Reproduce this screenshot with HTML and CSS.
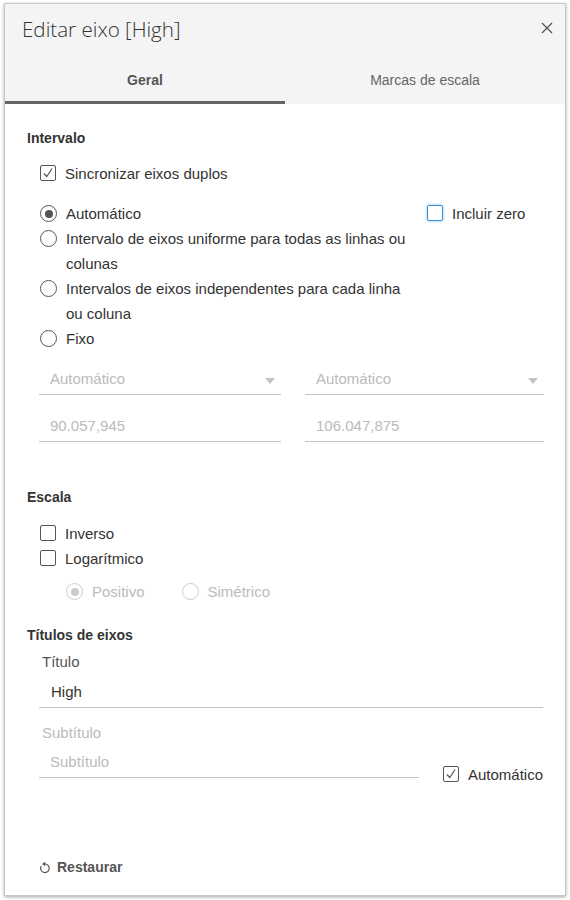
FILE: index.html
```html
<!DOCTYPE html>
<html lang="pt">
<head>
  <meta charset="UTF-8">
  <title>Editar eixo [High]</title>
  <link rel="stylesheet" href="styles.css">
</head>
<body>
  <div class="dialog">
    <div class="header">
      <div class="title-row">
        <h1>Editar eixo [High]</h1>
        <svg class="close" width="12" height="12" viewBox="0 0 12 12"><path d="M1 1 L11 11 M11 1 L1 11" stroke="#555" stroke-width="1.3" fill="none"/></svg>
      </div>
      <div class="tabs">
        <div class="tab active">Geral</div>
        <div class="tab">Marcas de escala</div>
      </div>
    </div>

    <div class="content">
      <!-- Intervalo -->
      <div class="section-title">Intervalo</div>
      <div class="option sync">
        <span class="check checked"><svg width="12" height="12" viewBox="0 0 12 12"><path d="M2 6.5 L4.8 9.5 L10 1.5" stroke="#555" stroke-width="1.2" fill="none"/></svg></span>
        <span>Sincronizar eixos duplos</span>
      </div>

      <div class="range-row">
        <div class="range-options">
          <div class="option"><span class="radio checked"></span><span class="label">Automático</span></div>
          <div class="option"><span class="radio"></span><span class="label">Intervalo de eixos uniforme para todas as linhas ou colunas</span></div>
          <div class="option"><span class="radio"></span><span class="label">Intervalos de eixos independentes para cada linha ou coluna</span></div>
          <div class="option"><span class="radio"></span><span class="label">Fixo</span></div>
        </div>
        <div class="option zero">
          <span class="check focus"></span>
          <span>Incluir zero</span>
        </div>
      </div>

      <div class="fixed-grid">
        <div class="field disabled select">Automático<span class="caret"></span></div>
        <div class="field disabled select">Automático<span class="caret"></span></div>
        <div class="field disabled">90.057,945</div>
        <div class="field disabled">106.047,875</div>
      </div>

      <!-- Escala -->
      <div class="section-title scale-title">Escala</div>
      <div class="option scale-first"><span class="check"></span><span>Inverso</span></div>
      <div class="option"><span class="check"></span><span>Logarítmico</span></div>
      <div class="log-options">
        <div class="option disabled"><span class="radio checked"></span><span>Positivo</span></div>
        <div class="option disabled"><span class="radio"></span><span>Simétrico</span></div>
      </div>

      <!-- Títulos de eixos -->
      <div class="section-title titles-title">Títulos de eixos</div>
      <div class="titles">
        <div class="field-label">Título</div>
        <div class="field value">High</div>
        <div class="field-label disabled sub-label">Subtítulo</div>
        <div class="sub-row">
          <div class="field disabled sub-field">Subtítulo</div>
          <div class="option auto">
            <span class="check checked"><svg width="12" height="12" viewBox="0 0 12 12"><path d="M2 6.5 L4.8 9.5 L10 1.5" stroke="#555" stroke-width="1.2" fill="none"/></svg></span>
            <span>Automático</span>
          </div>
        </div>
      </div>

      <div class="restore">
        <svg width="12" height="13" viewBox="0 0 12 13"><path d="M6 3 A4.3 4.3 0 1 1 2.3 5" stroke="#555" stroke-width="1.2" fill="none"/><path d="M3 3 L6.2 0.8 L6.2 5.2 Z" fill="#555"/></svg>
        <span>Restaurar</span>
      </div>
    </div>
  </div>
</body>
</html>
```

FILE: styles.css
```css
body {
  margin: 0;
  background-color: #fff;
  font-family: "Liberation Sans", Arial, sans-serif;
  font-size: 15px;
  color: #333;
}
.dialog {
  margin: 3px 4px;
  width: 560px;
  height: 891px;
  border: 1px solid #c9c9c9;
  box-shadow: 0 1px 3px rgba(0,0,0,0.35);
  background-color: #fff;
  display: flex;
  flex-direction: column;
}
.header {
  background-color: #f4f4f4;
}
.title-row {
  display: flex;
  justify-content: space-between;
  align-items: center;
  height: 50px;
  padding: 0 12px 0 17px;
}
.title-row h1 {
  margin: 0;
  font-family: "Open Sans", sans-serif;
  font-weight: 300;
  font-size: 20.6px;
  color: #333;
}
.close {
  margin-top: -2px;
}
.tabs {
  display: flex;
  height: 50px;
}
.tab {
  flex: 1;
  text-align: center;
  font-size: 14px;
  line-height: 52px;
  height: 47px;
  border-bottom: 3px solid transparent;
  color: #666;
}
.tab.active {
  font-weight: bold;
  color: #555;
  border-bottom-color: #666;
}
.content {
  flex: 1;
  padding: 24px 22px 0 22px;
  display: flex;
  flex-direction: column;
}
.section-title {
  font-size: 14px;
  font-weight: bold;
  line-height: 20px;
  color: #333;
}
.option {
  display: flex;
  align-items: flex-start;
  gap: 9px;
  line-height: 25px;
  padding-left: 13px;
}
.option .label {
  width: 345px;
}
.sync {
  margin-top: 13px;
}
.check {
  flex: none;
  box-sizing: border-box;
  width: 16px;
  height: 16px;
  margin-top: 4px;
  border: 1px solid #555;
  border-radius: 2px;
  display: flex;
  align-items: center;
  justify-content: center;
  background-color: #fff;
}
.check.focus {
  border-color: #3a90d8;
  box-shadow: 0 0 3px #7bbcf0;
}
.radio {
  flex: none;
  box-sizing: border-box;
  width: 17px;
  height: 17px;
  margin-top: 4px;
  border: 1.3px solid #555;
  border-radius: 50%;
  display: flex;
  align-items: center;
  justify-content: center;
  background-color: #fff;
}
.radio.checked:after {
  content: "";
  width: 8px;
  height: 8px;
  border-radius: 50%;
  background-color: #555;
}
.range-row {
  display: flex;
  justify-content: space-between;
  margin-top: 15px;
}
.option.zero {
  padding: 0;
  width: 116px;
}
.fixed-grid {
  display: grid;
  grid-template-columns: 242px 239px;
  column-gap: 24px;
  row-gap: 17px;
  margin: 14px 0 0 12px;
}
.field {
  padding: 4px 11px 5px;
  line-height: 20px;
  border-bottom: 1px solid #c4c4c4;
  position: relative;
}
.disabled {
  color: #bbb;
}
.caret {
  position: absolute;
  right: 6px;
  top: 13px;
  border-left: 5px solid transparent;
  border-right: 5px solid transparent;
  border-top: 6px solid #c4c4c4;
}
.option.disabled .radio {
  border-color: #ccc;
}
.option.disabled .radio.checked:after {
  background-color: #ccc;
}
.scale-title {
  margin-top: 45px;
}
.scale-first {
  margin-top: 14px;
}
.log-options {
  display: flex;
  gap: 24px;
  margin: 8px 0 0 26px;
}
.titles-title {
  margin-top: 21px;
}
.titles {
  margin-left: 12px;
}
.field-label {
  line-height: 20px;
  margin-top: 7px;
  padding-left: 3px;
  color: #555;
}
.field-label.disabled {
  color: #bbb;
}
.field.value {
  margin-top: 6px;
  padding-left: 12px;
  color: #333;
}
.sub-label {
  margin-top: 15px;
}
.sub-row {
  display: flex;
  justify-content: space-between;
  align-items: flex-end;
  margin-top: 5px;
}
.sub-field {
  width: 358px;
}
.option.auto {
  padding: 0;
  margin-bottom: -9px;
}
.restore {
  margin-top: auto;
  margin-bottom: 20px;
  padding-left: 12px;
  display: flex;
  align-items: center;
  gap: 6px;
  font-size: 14px;
  font-weight: bold;
  color: #555;
}
```
